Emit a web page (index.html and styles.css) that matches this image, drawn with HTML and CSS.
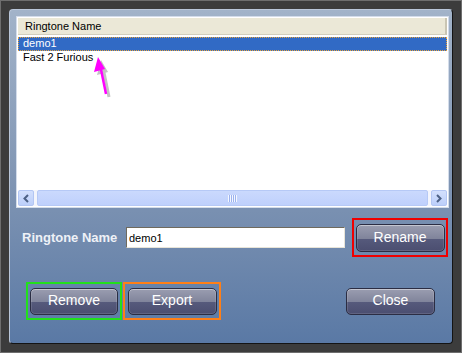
FILE: index.html
```html
<!DOCTYPE html>
<html>
    <head>
        <link rel="stylesheet" href="styles.css">
    </head>
    <body>
        <div class="window">
            <div class="panel">

                <div class="list">
                    <div class="list-header">Ringtone Name</div>
                    <div class="list-rows">
                        <div class="row selected">demo1</div>
                        <div class="row">Fast 2 Furious</div>
                    </div>
                    <div class="hscroll">
                        <div class="sb-btn">
                            <svg width="8" height="9" viewBox="0 0 8 9"><path d="M6 1 L2.5 4.5 L6 8" fill="none" stroke="#4d6185" stroke-width="2"/></svg>
                        </div>
                        <div class="sb-track">
                            <div class="sb-thumb">
                                <span class="grip"></span>
                            </div>
                        </div>
                        <div class="sb-btn">
                            <svg width="8" height="9" viewBox="0 0 8 9"><path d="M2 1 L5.5 4.5 L2 8" fill="none" stroke="#4d6185" stroke-width="2"/></svg>
                        </div>
                    </div>
                </div>

                <div class="name-row">
                    <label for="ringName">Ringtone Name</label>
                    <input type="text" id="ringName" value="demo1">
                    <div class="mark mark-red">
                        <button class="btn">Rename</button>
                    </div>
                </div>

                <div class="action-row">
                    <div class="mark mark-green">
                        <button class="btn">Remove</button>
                    </div>
                    <div class="mark mark-orange">
                        <button class="btn">Export</button>
                    </div>
                    <button class="btn btn-close">Close</button>
                </div>
            </div>

            <!-- annotation arrow pointing at the selected row -->
            <svg class="pointer" width="30" height="50" viewBox="0 0 30 50">
                <g transform="translate(3,3)" opacity="0.35">
                    <path d="M16 39 L10.5 12" stroke="#555" stroke-width="3" fill="none"/>
                    <path d="M8 2 L4 17 L15 14 Z" fill="#555"/>
                </g>
                <path d="M16 39 L10.5 12" stroke="#ff00ff" stroke-width="2.5" fill="none"/>
                <path d="M8 2 L4 17 L15 14 Z" fill="#ff00ff"/>
            </svg>
        </div>
    </body>
</html>
```

FILE: styles.css
```css
* {
    box-sizing: border-box;
}

body {
    margin: 0;
    background-color: #3b3b3b;
    font-family: "Liberation Sans", Arial, sans-serif;
}

.window {
    position: relative;
    width: 462px;
    height: 353px;
    border: 1px solid #6e6e6e;
    padding: 8px;
    background-color: #3c3c3c;
}

.panel {
    width: 444px;
    height: 335px;
    padding: 6px 3px 6px 6px;
    border-radius: 4px;
    border-top: 1px solid #b9c6d9;
    border-left: 1px solid #b9c6d9;
    border-right: 1px solid #141414;
    border-bottom: 1px solid #141414;
    background: linear-gradient(#a2b3c9, #8196b4 50%, #5a79a5);
}

/* list view */
.list {
    width: 433px;
    height: 192px;
    display: flex;
    flex-direction: column;
    border: 1px solid #d3dcea;
    background-color: #fff;
    padding: 1px;
    font-size: 11px;
}

.list-header {
    height: 17px;
    line-height: 16px;
    padding-left: 7px;
    background-color: #ebe8d7;
    border-bottom: 1px solid #d2cebc;
    border-right: 2px solid #c9c5b3;
    color: #000;
}

.list-rows {
    flex: 1;
    padding-top: 2px;
}

.row {
    height: 14px;
    line-height: 13px;
    padding-left: 5px;
    color: #000;
}

.row.selected {
    background-color: #316ac5;
    color: #fff;
    outline: 1px dotted #e8a33c;
    outline-offset: -1px;
}

.hscroll {
    height: 16px;
    display: flex;
    gap: 1px;
    background-color: #f3f5fc;
}

.sb-btn {
    width: 16px;
    height: 16px;
    display: flex;
    align-items: center;
    justify-content: center;
    border: 1px solid #b3c6f3;
    border-radius: 2px;
    background: linear-gradient(#d3e0fd, #bccffa);
}

.sb-track {
    flex: 1;
    padding: 0 2px;
}

.sb-thumb {
    height: 16px;
    display: flex;
    align-items: center;
    justify-content: center;
    border: 1px solid #b6c9f6;
    border-radius: 2px;
    background: linear-gradient(#cad9fd, #bfd0fc);
}

.grip {
    width: 9px;
    height: 7px;
    background: repeating-linear-gradient(90deg, #f4f7ff 0 1px, #9cb3ee 1px 2px);
}

/* name row */
.name-row {
    display: flex;
    align-items: center;
    gap: 7px;
    margin-top: 10px;
    padding-left: 6px;
    height: 39px;
}

.name-row label {
    width: 97px;
    font-size: 13px;
    font-weight: bold;
    color: #eef1f7;
}

.name-row input {
    width: 219px;
    height: 21px;
    padding: 0 2px;
    border-top: 1px solid #6f6a5e;
    border-left: 1px solid #6f6a5e;
    border-right: 1px solid #e8e4d8;
    border-bottom: 1px solid #e8e4d8;
    font-family: "Liberation Sans", Arial, sans-serif;
    font-size: 11px;
    color: #000;
    outline: none;
}

/* coloured marker boxes round the buttons */
.mark {
    display: flex;
    align-items: center;
    justify-content: center;
    border: 2px solid;
}

.mark-red {
    width: 96px;
    height: 39px;
    border-color: #f00000;
}

.mark-green {
    width: 96px;
    height: 38px;
    border-color: #22e01c;
}

.mark-orange {
    width: 98px;
    height: 38px;
    border-color: #ff7f17;
}

.btn {
    width: 89px;
    height: 28px;
    padding: 0 0 2px;
    border: 1px solid #2b2d43;
    border-radius: 5px;
    background: linear-gradient(#9a9db0, #80849b 52%, #565a7c 52%, #4b4e70);
    box-shadow: inset 0 1px 0 rgba(255, 255, 255, 0.35), inset 0 0 0 1px rgba(255, 255, 255, 0.12);
    color: #fff;
    font-family: "Liberation Sans", Arial, sans-serif;
    font-size: 14px;
}

.mark-green .btn {
    width: 88px;
    height: 27px;
}

.mark-orange .btn {
    height: 27px;
}

/* bottom row */
.action-row {
    display: flex;
    align-items: center;
    gap: 1px;
    margin-top: 25px;
    padding-left: 10px;
}

.btn-close {
    height: 27px;
    margin-left: auto;
    margin-right: 14px;
}

.pointer {
    position: absolute;
    left: 89px;
    top: 54px;
}
```
